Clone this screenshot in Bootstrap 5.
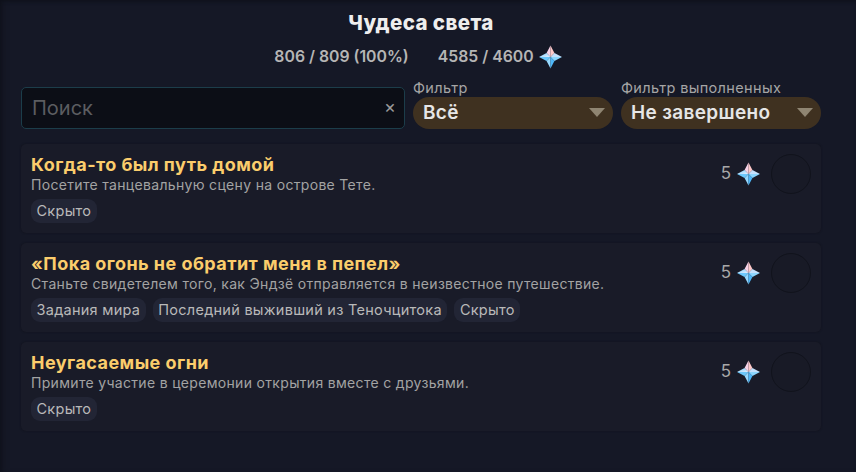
<!DOCTYPE html>
<html lang="ru">
<head>
<meta charset="utf-8">
<title>Чудеса света</title>
<link href="https://cdn.jsdelivr.net/npm/bootstrap@5.3.0/dist/css/bootstrap.min.css" rel="stylesheet">
<style>
html,body{height:100%}
body{background:#151826;font-family:Inter,"Noto Sans",sans-serif;color:#fff;overflow:hidden}
.shell{height:472px;padding:12px 35px 0 21px;box-shadow:inset 0 3px 4px -2px #0e1019,inset 6px 0 6px -4px #10121c}
.page-title{font-size:20.5px;font-weight:800;line-height:22px;color:#eeeeee;margin:0;letter-spacing:.4px}
.stats{margin-top:11px;height:24px;font-size:15.8px;font-weight:600;color:#b5b5b5;gap:29px;padding-right:6px}
.stats>span{gap:5px}
.filters{margin-top:18px;gap:8px}
.search-wrap{width:384px;height:42px}
.search-box{height:42px;background:#0c0e16;border:1px solid #1c3d4a;border-radius:5px;color:#ddd;font-size:20px;padding:0 30px 0 10px}
.search-box::placeholder{color:#5c5d61}
.search-box:focus{background:#0c0e16;color:#ddd;border-color:#1c3d4a;box-shadow:none}
.clear-x{position:absolute;right:9px;top:10px;font-size:18px;line-height:20px;color:#9a9a9a}
.filter-col{width:200px}
.filter-label{font-size:14.5px;line-height:16px;color:#a5a5a5;height:10px;display:block;white-space:nowrap;position:relative;top:-7px;letter-spacing:.35px}
.filter-pick{height:32px;border:0;border-radius:16px;background-color:#3f3120;background-image:none;color:#e6e6e6;font-size:19px;font-weight:600;padding:0 0 0 10px;margin-top:0;letter-spacing:.35px}
.filter-pick:focus{background-color:#3f3120;color:#e6e6e6;box-shadow:none}
.pick-wrap{height:32px}
.pick-arrow{position:absolute;right:8px;top:11px;width:0;height:0;border-left:8px solid transparent;border-right:8px solid transparent;border-top:9px solid #8f8572}
.cards{margin-top:15px;gap:10px}
.ach{height:89px;background:#191b28;border-radius:5px;padding:10px;box-shadow:0 0 2px #10121b}
.ach-name{font-size:18px;font-weight:700;line-height:22px;color:#fbcd6c;margin:0;letter-spacing:.45px}
.ach-desc{font-size:14px;line-height:18px;color:#a3a3a3;letter-spacing:.32px}
.tags{margin-top:5px;gap:7px}
.tag{height:24px;line-height:24px;padding:0 5.5px;border-radius:9px;background:#222535;color:#b9b9b9;font-size:14.5px;letter-spacing:.27px}
.reward{gap:6px;color:#a8a8a8;font-size:17px;height:40px}
.tick{width:40px;height:40px;margin-left:5px;border-radius:50%;background:#181a26;border:1px solid #11131c}
</style>
</head>
<body>
<svg width="0" height="0" class="position-absolute">
<defs>
<linearGradient id="gl" x1="0" y1="0" x2="1" y2="1"><stop offset="0" stop-color="#7ed0fb"/><stop offset="1" stop-color="#e8eeff"/></linearGradient>
<symbol id="gem" viewBox="0 0 24 24">
<polygon points="12,0 7.9,7.9 12,12" fill="#f8d3e8"/>
<polygon points="12,0 16.1,7.9 12,12" fill="#fdc8c8"/>
<polygon points="0,12 7.9,7.9 12,12" fill="url(#gl)"/>
<polygon points="24,12 16.1,7.9 12,12" fill="#c4e0fc"/>
<polygon points="0,12 7.9,16.1 12,12" fill="#6cc8fc"/>
<polygon points="24,12 16.1,16.1 12,12" fill="#8bd5fd"/>
<polygon points="12,24 7.9,16.1 12,12" fill="#97d9ff"/>
<polygon points="12,24 16.1,16.1 12,12" fill="#4db7f9"/>
</symbol>
</defs>
</svg>
<div class="shell">
<h1 class="page-title text-center">Чудеса света</h1>
<div class="stats d-flex justify-content-center align-items-center">
<span class="d-flex align-items-center">806 / 809 (100%)</span>
<span class="d-flex align-items-center">4585 / 4600 <svg width="23" height="24"><use href="#gem"/></svg></span>
</div>
<div class="filters d-flex align-items-end">
<div class="search-wrap position-relative">
<input class="form-control search-box" type="text" placeholder="Поиск" aria-label="Поиск">
<span class="clear-x">×</span>
</div>
<div class="filter-col">
<label class="filter-label">Фильтр</label>
<div class="pick-wrap position-relative">
<div class="form-select filter-pick d-flex align-items-center">Всё</div>
<span class="pick-arrow"></span>
</div>
</div>
<div class="filter-col">
<label class="filter-label">Фильтр выполненных</label>
<div class="pick-wrap position-relative">
<div class="form-select filter-pick d-flex align-items-center">Не завершено</div>
<span class="pick-arrow"></span>
</div>
</div>
</div>
<div class="cards d-flex flex-column">
<div class="ach d-flex justify-content-between">
<div>
<h2 class="ach-name">Когда-то был путь домой</h2>
<div class="ach-desc">Посетите танцевальную сцену на острове Тете.</div>
<div class="tags d-flex"><span class="tag">Скрыто</span></div>
</div>
<div class="reward d-flex align-items-center">5 <svg width="23" height="24"><use href="#gem"/></svg><span class="tick"></span></div>
</div>
<div class="ach d-flex justify-content-between">
<div>
<h2 class="ach-name">«Пока огонь не обратит меня в пепел»</h2>
<div class="ach-desc">Станьте свидетелем того, как Эндзё отправляется в неизвестное путешествие.</div>
<div class="tags d-flex"><span class="tag">Задания мира</span><span class="tag">Последний выживший из Теночцитока</span><span class="tag">Скрыто</span></div>
</div>
<div class="reward d-flex align-items-center">5 <svg width="23" height="24"><use href="#gem"/></svg><span class="tick"></span></div>
</div>
<div class="ach d-flex justify-content-between">
<div>
<h2 class="ach-name">Неугасаемые огни</h2>
<div class="ach-desc">Примите участие в церемонии открытия вместе с друзьями.</div>
<div class="tags d-flex"><span class="tag">Скрыто</span></div>
</div>
<div class="reward d-flex align-items-center">5 <svg width="23" height="24"><use href="#gem"/></svg><span class="tick"></span></div>
</div>
</div>
</div>
<script src="https://cdn.jsdelivr.net/npm/bootstrap@5.3.0/dist/js/bootstrap.bundle.min.js"></script>
</body>
</html>
